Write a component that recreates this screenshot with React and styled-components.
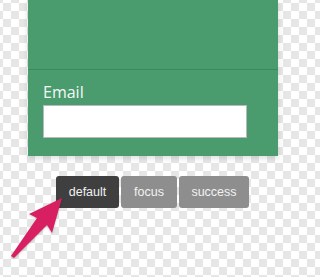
import React from 'react';
import styled, { createGlobalStyle } from 'styled-components';

const GlobalStyle = createGlobalStyle`
  html, body {
    margin: 0;
    padding: 0;
  }
  body {
    width: 309px;
    height: 277px;
    overflow: hidden;
    background-color: #ffffff;
    background-image: conic-gradient(#e6e6e6 25%, #ffffff 0 50%, #e6e6e6 0 75%, #ffffff 0);
    background-size: 16px 16px;
    background-position: 3px -5px;
  }
`;

const Page = styled.div`
  position: relative;
  width: 309px;
  height: 277px;
  display: flex;
  flex-direction: column;
`;

const Panel = styled.div`
  margin-left: 28px;
  width: 250px;
  height: 156px;
  background: #4a9c6e;
  box-shadow: 0 2px 6px rgba(0, 0, 0, 0.14);
  display: flex;
  flex-direction: column;
`;

const PanelTop = styled.div`
  height: 69px;
  border-bottom: 1px solid #3b8a5c;
`;

const Field = styled.div`
  padding: 11px 0 0 15px;
  display: flex;
  flex-direction: column;
`;

const Label = styled.label`
  font-family: "Open Sans", "Noto Sans", sans-serif;
  font-size: 16px;
  line-height: 23px;
  color: #f4f8f5;
`;

const Input = styled.input`
  box-sizing: border-box;
  width: 204px;
  height: 33px;
  margin: 1px 0 0;
  border: 1px solid #b9b9b9;
  background: #ffffff;
  outline: none;
`;

const ButtonRow = styled.div`
  margin: 20px 0 0 56px;
  display: flex;
  gap: 2px;
`;

const StateButton = styled.button`
  height: 32px;
  width: ${p => p.$w}px;
  padding: 0;
  border: none;
  border-radius: 3px;
  background: ${p => (p.$active ? '#3f3f3f' : '#8e8e8e')};
  color: #f2f2f2;
  font-family: "Liberation Sans", Arial, sans-serif;
  font-size: 12.5px;
  cursor: pointer;
`;

const Arrow = styled.svg`
  position: absolute;
  left: 0;
  top: 190px;
  filter: drop-shadow(0 1px 1px rgba(0, 0, 0, 0.2));
`;

export default function App() {
  return (
    <>
      <GlobalStyle />
      <Page>
        <Panel>
          <PanelTop />
          <Field>
            <Label>Email</Label>
            <Input type="text" />
          </Field>
        </Panel>
        <ButtonRow>
          <StateButton $active $w={63}>default</StateButton>
          <StateButton $w={56}>focus</StateButton>
          <StateButton $w={70}>success</StateButton>
        </ButtonRow>
        <Arrow width="75" height="75" viewBox="0 190 75 75">
          <polygon
            points="62,198 52,233 47,225 14,258 11,256 37,218 29,214"
            fill="#d81f62"
          />
        </Arrow>
      </Page>
    </>
  );
}
